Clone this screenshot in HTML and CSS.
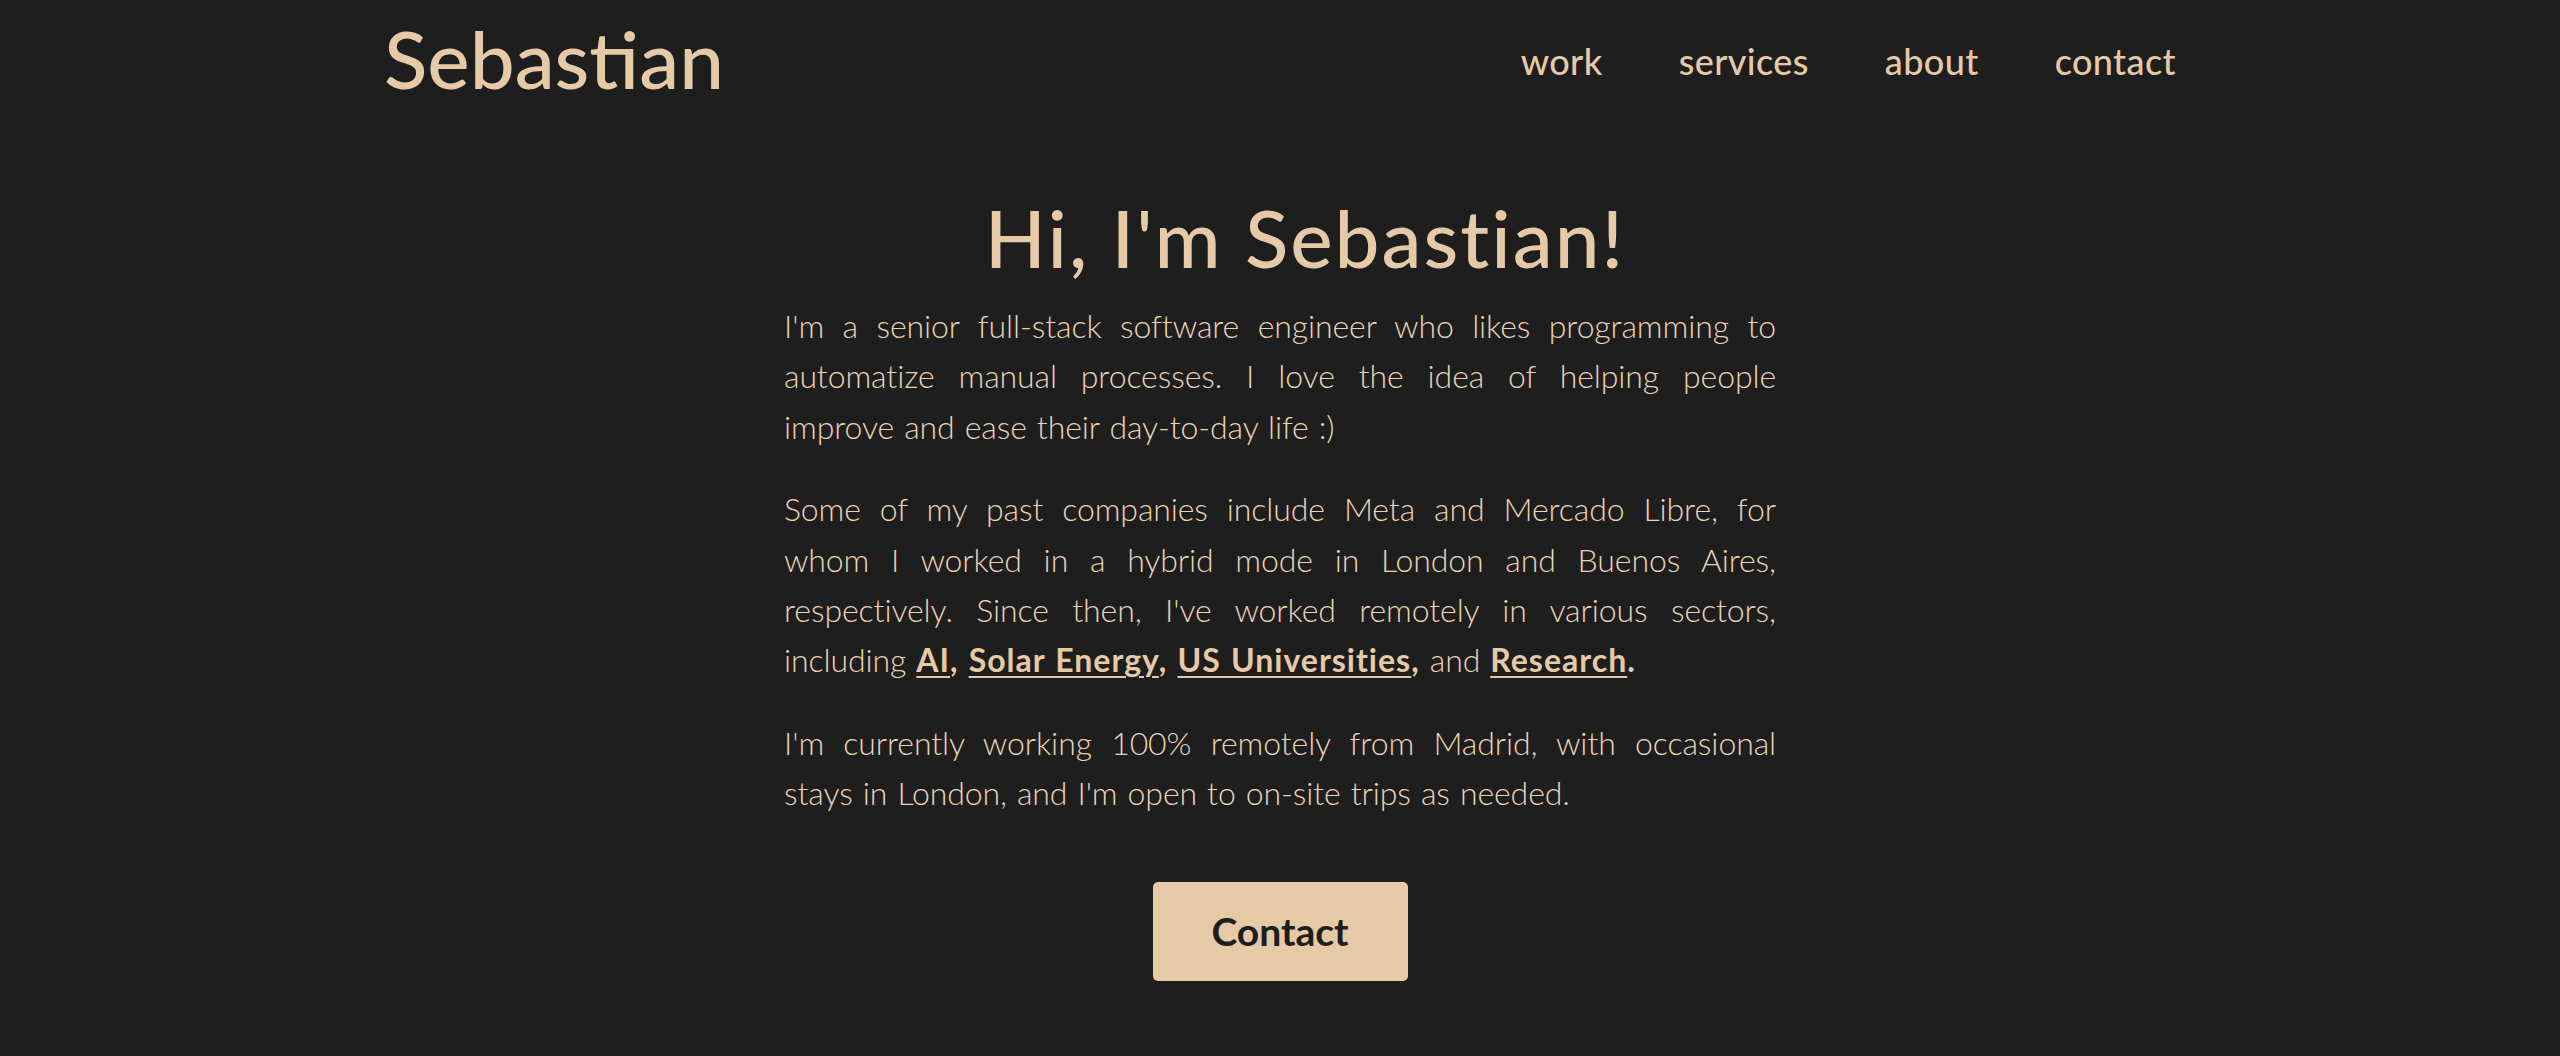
FILE: index.html
```html
<!DOCTYPE html>
<html lang="en">
<head>
<meta charset="utf-8">
<title>Sebastian</title>
<link rel="stylesheet" href="styles.css">
</head>
<body>
<header class="site-header">
  <a class="logo" href="#">Sebastian</a>
  <nav class="nav">
    <a href="#">work</a>
    <a href="#">services</a>
    <a href="#">about</a>
    <a href="#">contact</a>
  </nav>
</header>
<main class="hero">
  <h1 class="hero-title">Hi, I'm Sebastian!</h1>
  <div class="hero-text">
    <p><span class="ln">I'm a senior full-stack software engineer who likes programming to</span> <span class="ln">automatize manual processes. I love the idea of helping people</span> <span class="ln-end">improve and ease their day-to-day life :)</span></p>
    <p><span class="ln">Some of my past companies include Meta and Mercado Libre, for</span> <span class="ln">whom I worked in a hybrid mode in London and Buenos Aires,</span> <span class="ln">respectively. Since then, I've worked remotely in various sectors,</span> <span class="ln-end">including <strong><a href="#">AI</a>,</strong> <strong><a href="#">Solar Energy</a>,</strong> <strong><a href="#">US Universities</a>,</strong> and <strong><a href="#">Research</a>.</strong></span></p>
    <p><span class="ln">I'm currently working 100% remotely from Madrid, with occasional</span> <span class="ln-end">stays in London, and I'm open to on-site trips as needed.</span></p>
  </div>
  <a class="btn" href="#">Contact</a>
</main>
</body>
</html>
```
FILE: styles.css
```css
html, body {
  margin: 0;
  padding: 0;
}
body {
  background: #1e1e1e;
  color: #e6c9a7;
  font-family: "Lato", "Open Sans", sans-serif;
}
a {
  color: inherit;
  text-decoration: none;
}
.site-header {
  display: flex;
  justify-content: space-between;
  align-items: flex-start;
  padding: 10px 384px 0;
}
.logo {
  font-size: 80px;
  line-height: 96px;
  font-weight: 500;
}
.nav {
  display: flex;
  gap: 76px;
  margin-top: 30px;
  font-size: 36px;
  line-height: 43px;
  font-weight: 500;
  letter-spacing: 0.4px;
}
.hero {
  display: flex;
  flex-direction: column;
  align-items: center;
}
.hero-title {
  margin: 83px 0 0;
  padding-left: 50px;
  font-size: 80px;
  line-height: 96px;
  font-weight: 500;
  letter-spacing: 2px;
}
.hero-text {
  width: 992px;
  margin-top: 16px;
}
.hero-text p {
  margin: 0 0 32px;
  font-size: 32px;
  line-height: 50.4px;
  font-weight: 300;
  letter-spacing: -0.1px;
  word-spacing: 1.5px;
  text-align: justify;
  color: #ebd3b5;
}
.hero-text p:last-child {
  margin-bottom: 0;
}
.ln {
  display: block;
  text-align: justify;
  text-align-last: justify;
  white-space: nowrap;
}
.ln-end {
  display: block;
  text-align: left;
}
.hero-text strong {
  font-weight: 700;
  letter-spacing: 1px;
  color: #e6c9a7;
}
.hero-text strong a {
  text-decoration: underline;
  text-decoration-thickness: 2px;
  text-underline-offset: 4px;
}
.btn {
  margin-top: 63px;
  width: 255px;
  height: 99px;
  box-sizing: border-box;
  display: flex;
  align-items: center;
  justify-content: center;
  background: #e6c9a7;
  color: #1e1e1e;
  border-radius: 5px;
  font-size: 39px;
  font-weight: 700;
}
```
